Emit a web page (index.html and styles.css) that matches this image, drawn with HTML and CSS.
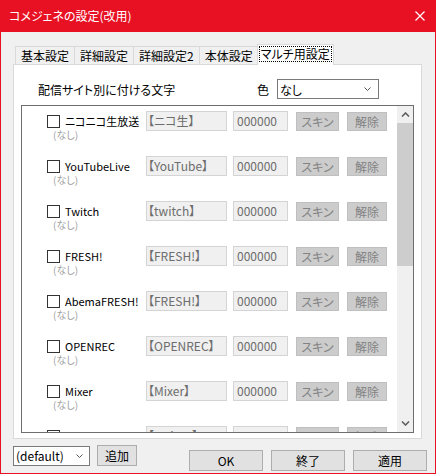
FILE: index.html
```html
<!DOCTYPE html>
<html lang="ja">
<head>
  <meta charset="UTF-8">
  <title>コメジェネの設定(改用)</title>
  <link rel="stylesheet" href="styles.css">
</head>
<body>
  <div class="window">
    <div class="titlebar">
      <span class="title">コメジェネの設定(改用)</span>
      <svg class="close" width="10" height="10" viewBox="0 0 10 10">
        <path d="M0.5 0.5 L9.5 9.5 M9.5 0.5 L0.5 9.5" stroke="#fff" stroke-width="1.2" fill="none"/>
      </svg>
    </div>

    <div class="content">
      <!-- tab strip -->
      <div class="tabs">
        <div class="tab">基本設定</div>
        <div class="tab">詳細設定</div>
        <div class="tab">詳細設定2</div>
        <div class="tab">本体設定</div>
        <div class="tab active"><span class="focus">マルチ用設定</span></div>
      </div>

      <div class="panel">
        <div class="panel-head">
          <span class="head-label">配信サイト別に付ける文字</span>
          <span class="color-label">色</span>
          <div class="select color-select">
            <span>なし</span>
            <svg class="chev" width="7" height="4" viewBox="0 0 7 4"><path d="M0.5 0.5 L3.5 3.5 L6.5 0.5" stroke="#555" fill="none"/></svg>
          </div>
        </div>

        <div class="list">
          <div class="rows" id="rows">
            <!-- rows are filled in by the script below -->
          </div>
          <div class="scrollbar">
            <div class="arrow">
              <svg width="9" height="5" viewBox="0 0 9 5"><path d="M1 4.5 L4.5 1 L8 4.5" stroke="#606060" stroke-width="1.6" fill="none"/></svg>
            </div>
            <div class="thumb"></div>
            <div class="track"></div>
            <div class="arrow">
              <svg width="9" height="5" viewBox="0 0 9 5"><path d="M1 0.5 L4.5 4 L8 0.5" stroke="#606060" stroke-width="1.6" fill="none"/></svg>
            </div>
          </div>
        </div>
      </div>

      <div class="footer">
        <div class="select preset-select">
          <span class="select-text">(default)</span>
          <svg class="chev" width="7" height="4" viewBox="0 0 7 4"><path d="M0.5 0.5 L3.5 3.5 L6.5 0.5" stroke="#555" fill="none"/></svg>
        </div>
        <button class="btn add-btn">追加</button>
        <div class="actions">
          <button class="btn">OK</button>
          <button class="btn">終了</button>
          <button class="btn">適用</button>
        </div>
      </div>
    </div>
  </div>

  <script>
    const sites = [
      ['ニコニコ生放送', '【ニコ生】'],
      ['YouTubeLive', '【YouTube】'],
      ['Twitch', '【twitch】'],
      ['FRESH!', '【FRESH!】'],
      ['AbemaFRESH!', '【FRESH!】'],
      ['OPENREC', '【OPENREC】'],
      ['Mixer', '【Mixer】'],
      ['Twicas', '【Twicas】']
    ];

    const rows = document.getElementById('rows');
    sites.forEach(function (site, i) {
      const row = document.createElement('div');
      row.className = 'row';
      // the last row is scrolled half out of view, its sub line is never seen
      const sub = i < sites.length - 1 ? '<div class="row-sub">(なし)</div>' : '';
      row.innerHTML = `
        <div class="row-main">
          <span class="check"></span>
          <span class="site-name">${site[0]}</span>
          <span class="field field-tag">${site[1]}</span>
          <span class="field field-color">000000</span>
          <span class="mini-btn skin-btn">スキン</span>
          <span class="mini-btn clear-btn">解除</span>
        </div>
        ${sub}
      `;
      rows.appendChild(row);
    });
  </script>
</body>
</html>
```

FILE: styles.css
```css
body {
  margin: 0;
  font-family: "Noto Sans CJK JP", "Noto Sans", sans-serif;
  font-size: 12px;
  font-feature-settings: "palt";
  color: #000;
  background: #fff;
}
.window {
  width: 436px;
  height: 474px;
  box-sizing: border-box;
  border: 1px solid #e81123;
  border-top: none;
  background-color: #f0f0f0;
}
.titlebar {
  height: 31px;
  margin: 0 -1px;
  background-color: #e81123;
  color: white;
  display: flex;
  align-items: center;
  justify-content: space-between;
  padding: 0 11px 1px 9px;
}
.title {
  line-height: 16px;
}
.close {
  display: block;
}
.content {
  padding-top: 12px;
}

/* tabs */
.tabs {
  display: flex;
  align-items: flex-end;
  height: 20px;
  margin-left: 14px;
  position: relative;
  z-index: 1;
}
.tab {
  height: 17px;
  line-height: 17px;
  padding: 0 5px;
  border: 1px solid #d9d9d9;
  border-bottom: none;
  margin-right: -1px;
  background-color: #f0f0f0;
}
.tab.active {
  height: 20px;
  line-height: 18px;
  margin-left: -1px;
  padding: 0 2px;
  background-color: white;
  margin-bottom: -1px;
}
.focus {
  display: inline-block;
  outline: 1px dotted #000;
  line-height: 14px;
  padding: 0 1px;
}

.panel {
  margin: 0 13px 0 12px;
  height: 375px;
  box-sizing: border-box;
  border: 1px solid #d9d9d9;
  background-color: white;
  padding: 14px 7px 0 7px;
}
.panel-head {
  display: flex;
  align-items: center;
  height: 20px;
  padding: 0 35px 0 17px;
}
.head-label {
  flex: 1;
}
.color-label {
  margin-right: 8px;
}
.select {
  box-sizing: border-box;
  height: 20px;
  border: 1px solid #7a7a7a;
  background-color: white;
  display: flex;
  align-items: center;
  justify-content: space-between;
  padding: 0 7px 0 2px;
}
.color-select {
  width: 102px;
}
.chev {
  display: block;
  flex: none;
}

/* list box */
.list {
  margin-top: 6px;
  height: 328px;
  box-sizing: border-box;
  border: 1px solid #6e6e6e;
  display: flex;
}
.rows {
  flex: 1;
  overflow: hidden;
}
.row {
  height: 45px;
  box-sizing: border-box;
  padding-top: 5px;
}
.row-main {
  display: flex;
  align-items: center;
  height: 20px;
}
.check {
  width: 13px;
  height: 13px;
  box-sizing: border-box;
  border: 1px solid #333;
  background: white;
  margin-left: 25px;
}
.site-name {
  width: 81px;
  margin-left: 5px;
  font-size: 11px;
  line-height: 16px;
  white-space: nowrap;
}
.field {
  box-sizing: border-box;
  height: 20px;
  line-height: 18px;
  border: 1px solid #d4d4d4;
  background-color: #f0f0f0;
  color: #6d6d6d;
  padding-left: 1px;
  white-space: nowrap;
  overflow: hidden;
}
.field-tag {
  width: 81px;
}
.field-color {
  width: 55px;
  margin-left: 6px;
  padding-left: 3px;
}
.mini-btn {
  box-sizing: border-box;
  height: 19px;
  line-height: 17px;
  border: 1px solid #bfbfbf;
  background-color: #cccccc;
  color: #838383;
  text-align: center;
}
.skin-btn {
  width: 43px;
  margin-left: 8px;
}
.clear-btn {
  width: 40px;
  margin-left: 8px;
}
.row-sub {
  margin-left: 31px;
  font-size: 10px;
  line-height: 12px;
  margin-top: -2px;
  color: #a0a0a0;
}

/* scrollbar */
.scrollbar {
  width: 16px;
  display: flex;
  flex-direction: column;
  background-color: #f0f0f0;
}
.arrow {
  height: 17px;
  display: flex;
  align-items: center;
  justify-content: center;
}
.thumb {
  height: 143px;
  background-color: #cdcdcd;
}
.track {
  flex: 1;
}

/* bottom bar */
.footer {
  display: flex;
  align-items: flex-start;
  padding: 0 8px 0 12px;
}
.preset-select {
  width: 77px;
  margin-top: 7px;
  padding-right: 6px;
}
.select-text {
  line-height: 16px;
  white-space: nowrap;
}
.btn {
  font-family: "Noto Sans CJK JP", "Noto Sans", sans-serif;
  font-size: 12px;
  font-feature-settings: "palt";
  box-sizing: border-box;
  height: 21px;
  padding: 0;
  border: 1px solid #adadad;
  background-color: #e1e1e1;
  color: #000;
}
.add-btn {
  width: 40px;
  margin: 6px 0 0 7px;
}
.actions {
  margin-left: auto;
  margin-top: 11px;
  display: flex;
  gap: 8px;
}
.actions .btn {
  width: 74px;
}
```
